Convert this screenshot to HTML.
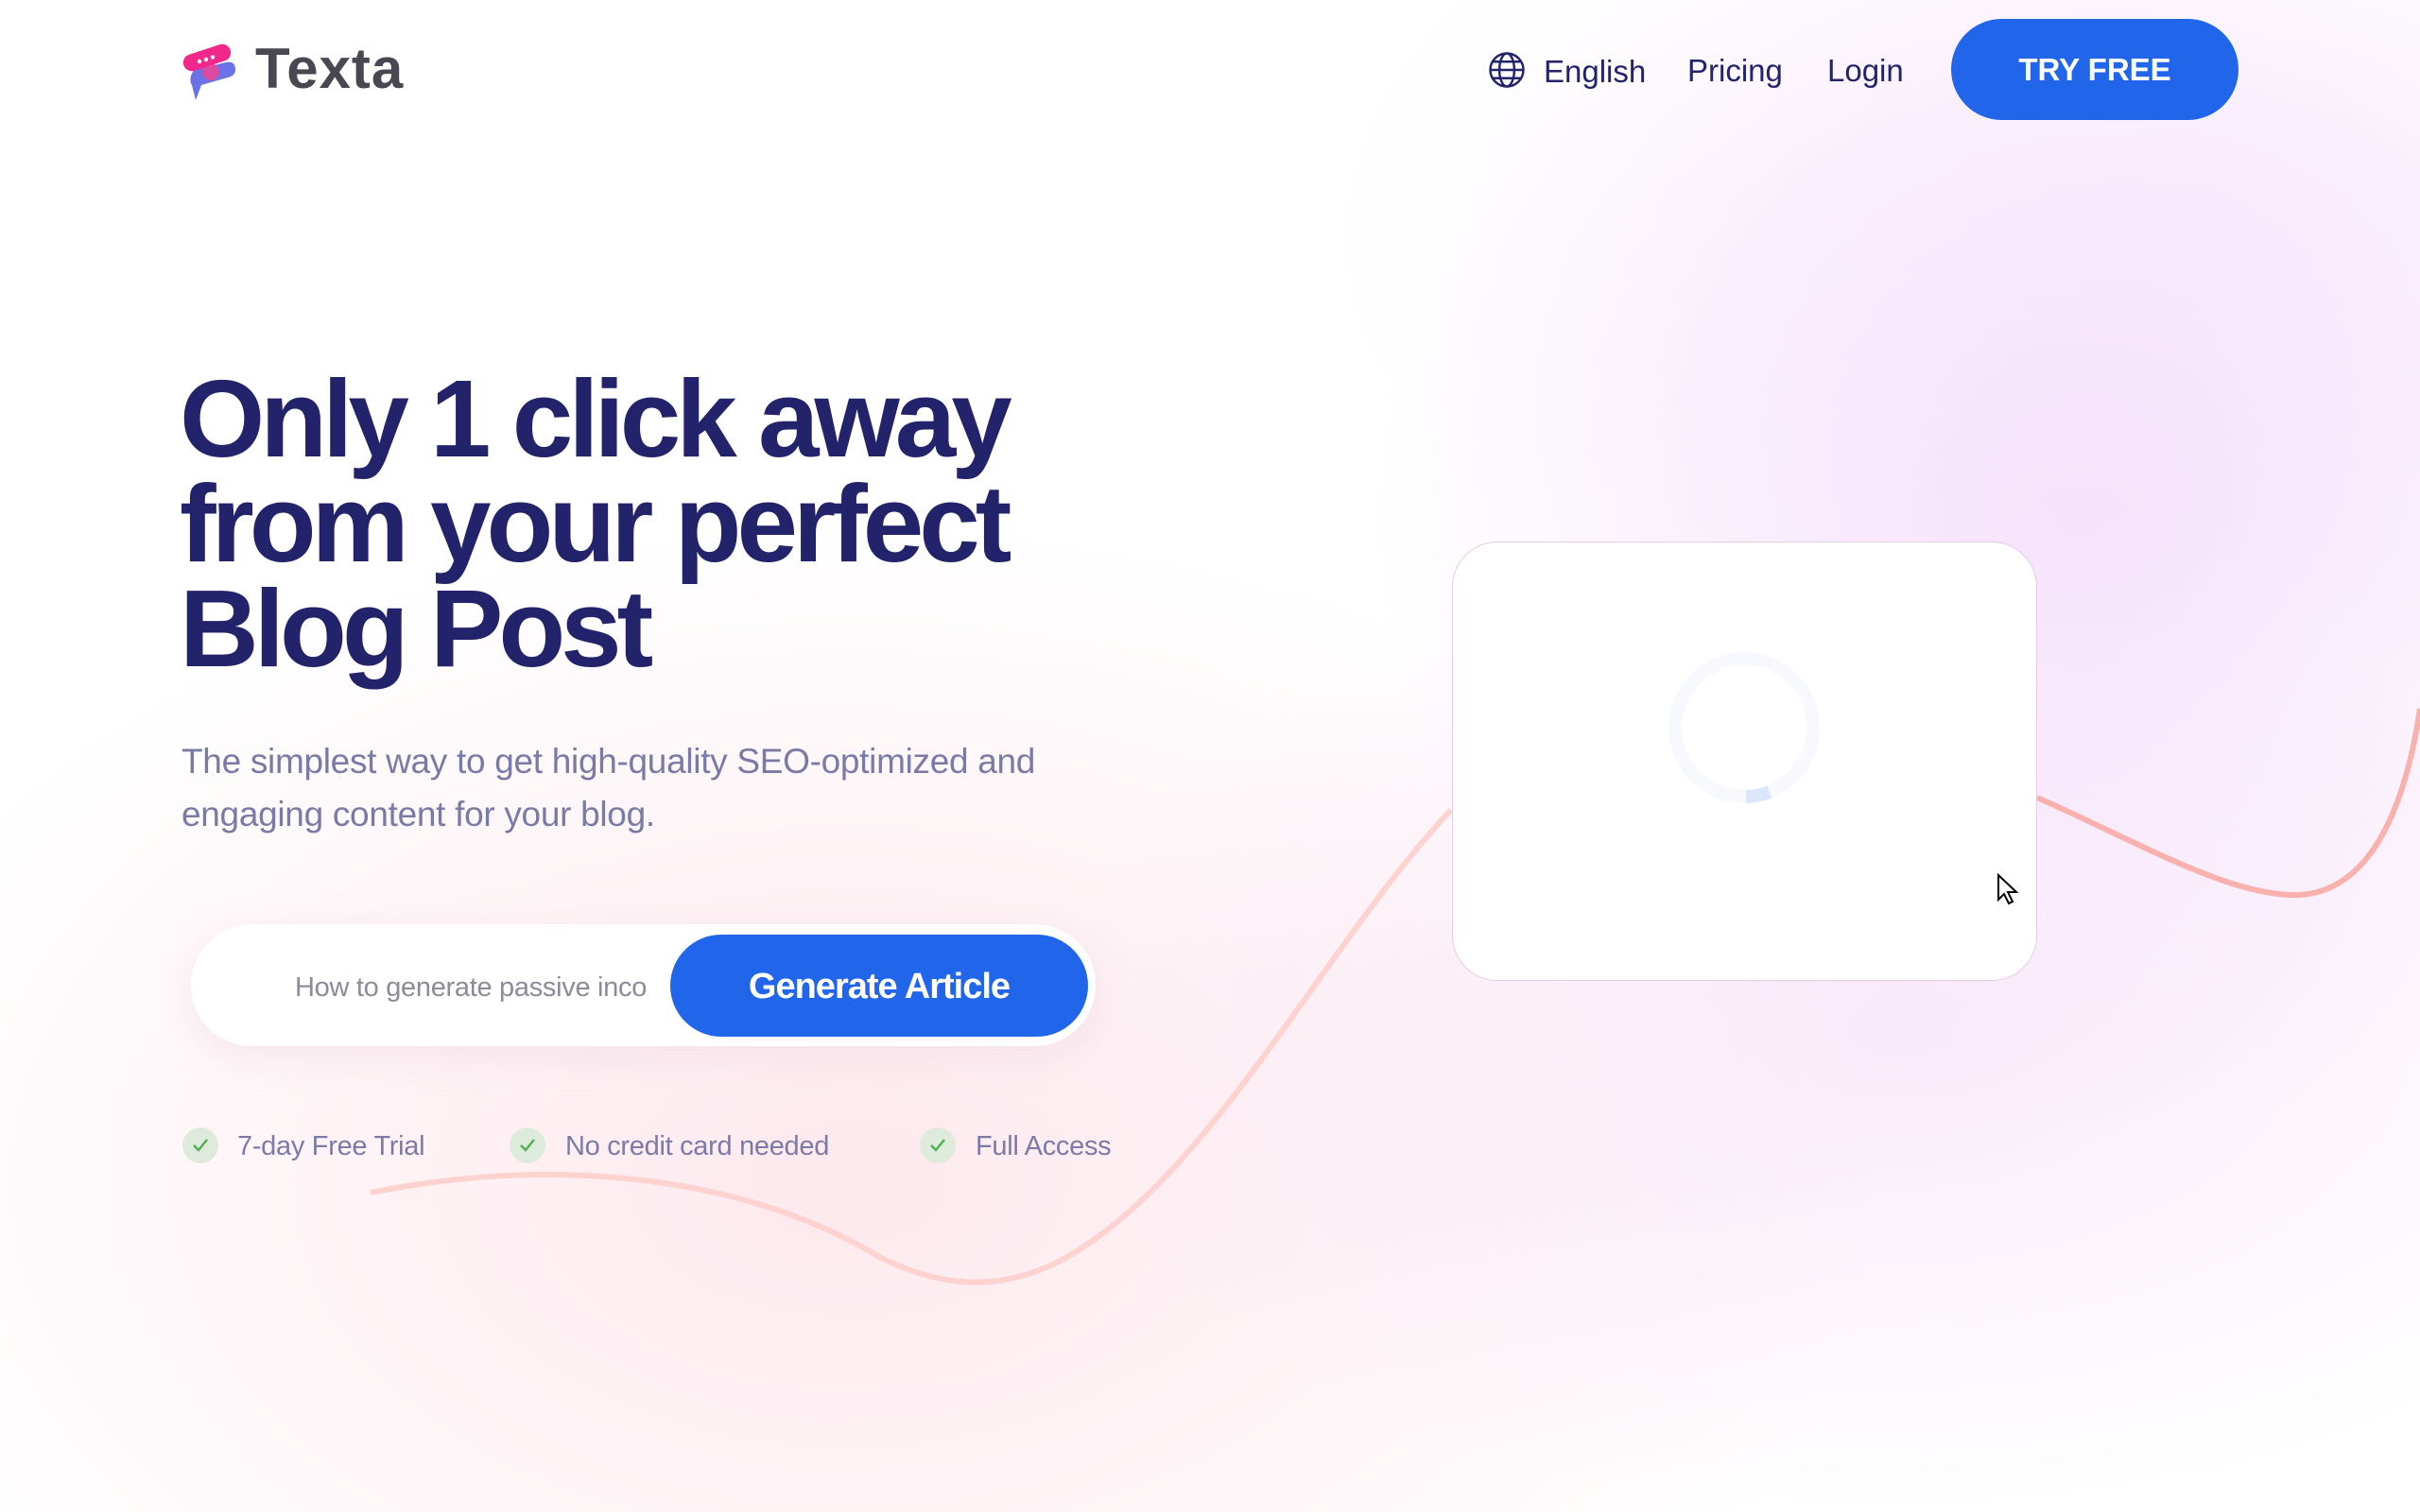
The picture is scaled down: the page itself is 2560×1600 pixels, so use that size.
<!DOCTYPE html>
<html><head><meta charset="utf-8"><style>
*{margin:0;padding:0;box-sizing:border-box}
body{width:2560px;height:1600px;overflow:hidden;position:relative;font-family:"Liberation Sans",sans-serif;background:#fff}
.bg{position:absolute;inset:0;background:
radial-gradient(ellipse 750px 650px at 2200px 550px,rgba(242,218,250,.75),rgba(242,218,250,0) 100%),
radial-gradient(ellipse 900px 500px at 2000px 1100px,rgba(245,222,245,.6),rgba(245,222,245,0) 100%),
radial-gradient(ellipse 1100px 700px at 900px 1250px,rgba(252,225,232,.75),rgba(252,225,232,0) 100%),
radial-gradient(ellipse 900px 500px at 2300px 250px,rgba(248,232,252,.6),rgba(248,232,252,0) 100%)}
.abs{position:absolute}
.nav{font-size:33px;color:#23236b;top:56px}
h1{position:absolute;left:190px;top:388px;font-size:116px;line-height:111px;font-weight:700;color:#23236b;letter-spacing:-5px}
.sub{position:absolute;left:192px;top:778px;font-size:37px;line-height:56px;color:#7a7aa6;letter-spacing:-0.3px}
.chk{position:absolute;top:1193px;width:38px;height:38px;border-radius:50%;background:#deeadc}
.chk svg{position:absolute;left:10px;top:11px}
.ct{position:absolute;top:1197px;font-size:29px;color:#7b7aa8;letter-spacing:-0.3px}
</style></head><body>
<div class="bg"></div>
<svg class="abs" style="left:0;top:0" width="2560" height="1600">
<path d="M392 1262 C 600 1220 800 1250 930 1330 C 1000 1365 1060 1365 1120 1335 C 1280 1250 1400 1000 1535 857" fill="none" stroke="#fdd2cf" stroke-width="6"/>
<path d="M2155 844 C 2260 890 2360 950 2433 947 C 2510 942 2545 850 2560 750" fill="none" stroke="#f9b1ad" stroke-width="6"/>
</svg>
<svg class="abs" style="left:193px;top:46px" width="60" height="62" viewBox="0 0 60 62">
<path d="M12 28 L46 20 Q56 18 56 28 Q56 34 48 36 L20 44 L14 60 L10 44 Q6 38 12 28Z" fill="#6b72e8"/>
<circle cx="30" cy="30" r="9" fill="#e8479a" opacity=".9"/>
<rect x="0" y="6" width="52" height="18" rx="9" transform="rotate(-18 26 15)" fill="#f2278c"/>
<circle cx="18" cy="19" r="2.2" fill="#fff"/><circle cx="25" cy="17" r="2.2" fill="#fff"/><circle cx="32" cy="14.5" r="2.2" fill="#fff"/>
</svg>
<div class="abs" style="left:270px;top:38px;font-size:60px;font-weight:700;color:#4a4753;letter-spacing:1px">Texta</div>
<svg class="abs" style="left:1573px;top:53px" width="42" height="42" viewBox="0 0 24 24" fill="none" stroke="#23236b" stroke-width="1.4"><circle cx="12" cy="12" r="10"/><ellipse cx="12" cy="12" rx="4.5" ry="10"/><path d="M2 12h20M3.5 7h17M3.5 17h17"/></svg>
<div class="abs nav" style="left:1633px;top:57px">English</div>
<div class="abs nav" style="left:1785px">Pricing</div>
<div class="abs nav" style="left:1933px">Login</div>
<div class="abs" style="left:2064px;top:20px;width:304px;height:107px;border-radius:54px;background:#2166ea;color:#fff;font-size:33px;font-weight:700;text-align:center;line-height:107px">TRY FREE</div>
<h1>Only 1 click away<br>from your perfect<br>Blog Post</h1>
<div class="sub">The simplest way to get high-quality SEO-optimized and<br>engaging content for your blog.</div>
<div class="abs" style="left:202px;top:978px;width:957px;height:129px;border-radius:65px;background:#fff;box-shadow:0 10px 40px rgba(230,200,215,.35)"></div>
<div class="abs" style="left:312px;top:1029px;font-size:29px;color:#8b8b99;letter-spacing:-0.3px">How to generate passive inco</div>
<div class="abs" style="left:709px;top:989px;width:442px;height:108px;border-radius:54px;background:#2166ea;color:#fff;font-size:38px;font-weight:700;text-align:center;line-height:110px;letter-spacing:-1px">Generate Article</div>
<div class="chk" style="left:193px"><svg width="18" height="16" viewBox="0 0 18 16"><path d="M2 8 L7 13 L16 2" fill="none" stroke="#4caf50" stroke-width="2.4"/></svg></div>
<div class="ct" style="left:251px">7-day Free Trial</div>
<div class="chk" style="left:539px"><svg width="18" height="16" viewBox="0 0 18 16"><path d="M2 8 L7 13 L16 2" fill="none" stroke="#4caf50" stroke-width="2.4"/></svg></div>
<div class="ct" style="left:598px">No credit card needed</div>
<div class="chk" style="left:973px"><svg width="18" height="16" viewBox="0 0 18 16"><path d="M2 8 L7 13 L16 2" fill="none" stroke="#4caf50" stroke-width="2.4"/></svg></div>
<div class="ct" style="left:1032px">Full Access</div>
<div class="abs" style="left:1536px;top:573px;width:619px;height:465px;border-radius:48px;background:#fff;border:1px solid #e3cde6"></div>
<svg class="abs" style="left:1760px;top:685px" width="170" height="170" viewBox="0 0 170 170"><circle cx="85" cy="85" r="73" fill="none" stroke="#f7f9fe" stroke-width="14"/><path d="M87 158 A73 73 0 0 0 112 153" fill="none" stroke="#dce7fb" stroke-width="14"/></svg>
<svg class="abs" style="left:2112px;top:924px" width="26" height="34" viewBox="0 0 13 17"><path d="M1 1 L1 14 L4 11 L6.5 16 L8.5 15 L6 10 L10.5 10 Z" fill="#fff" stroke="#000" stroke-width="1"/></svg>
</body></html>
